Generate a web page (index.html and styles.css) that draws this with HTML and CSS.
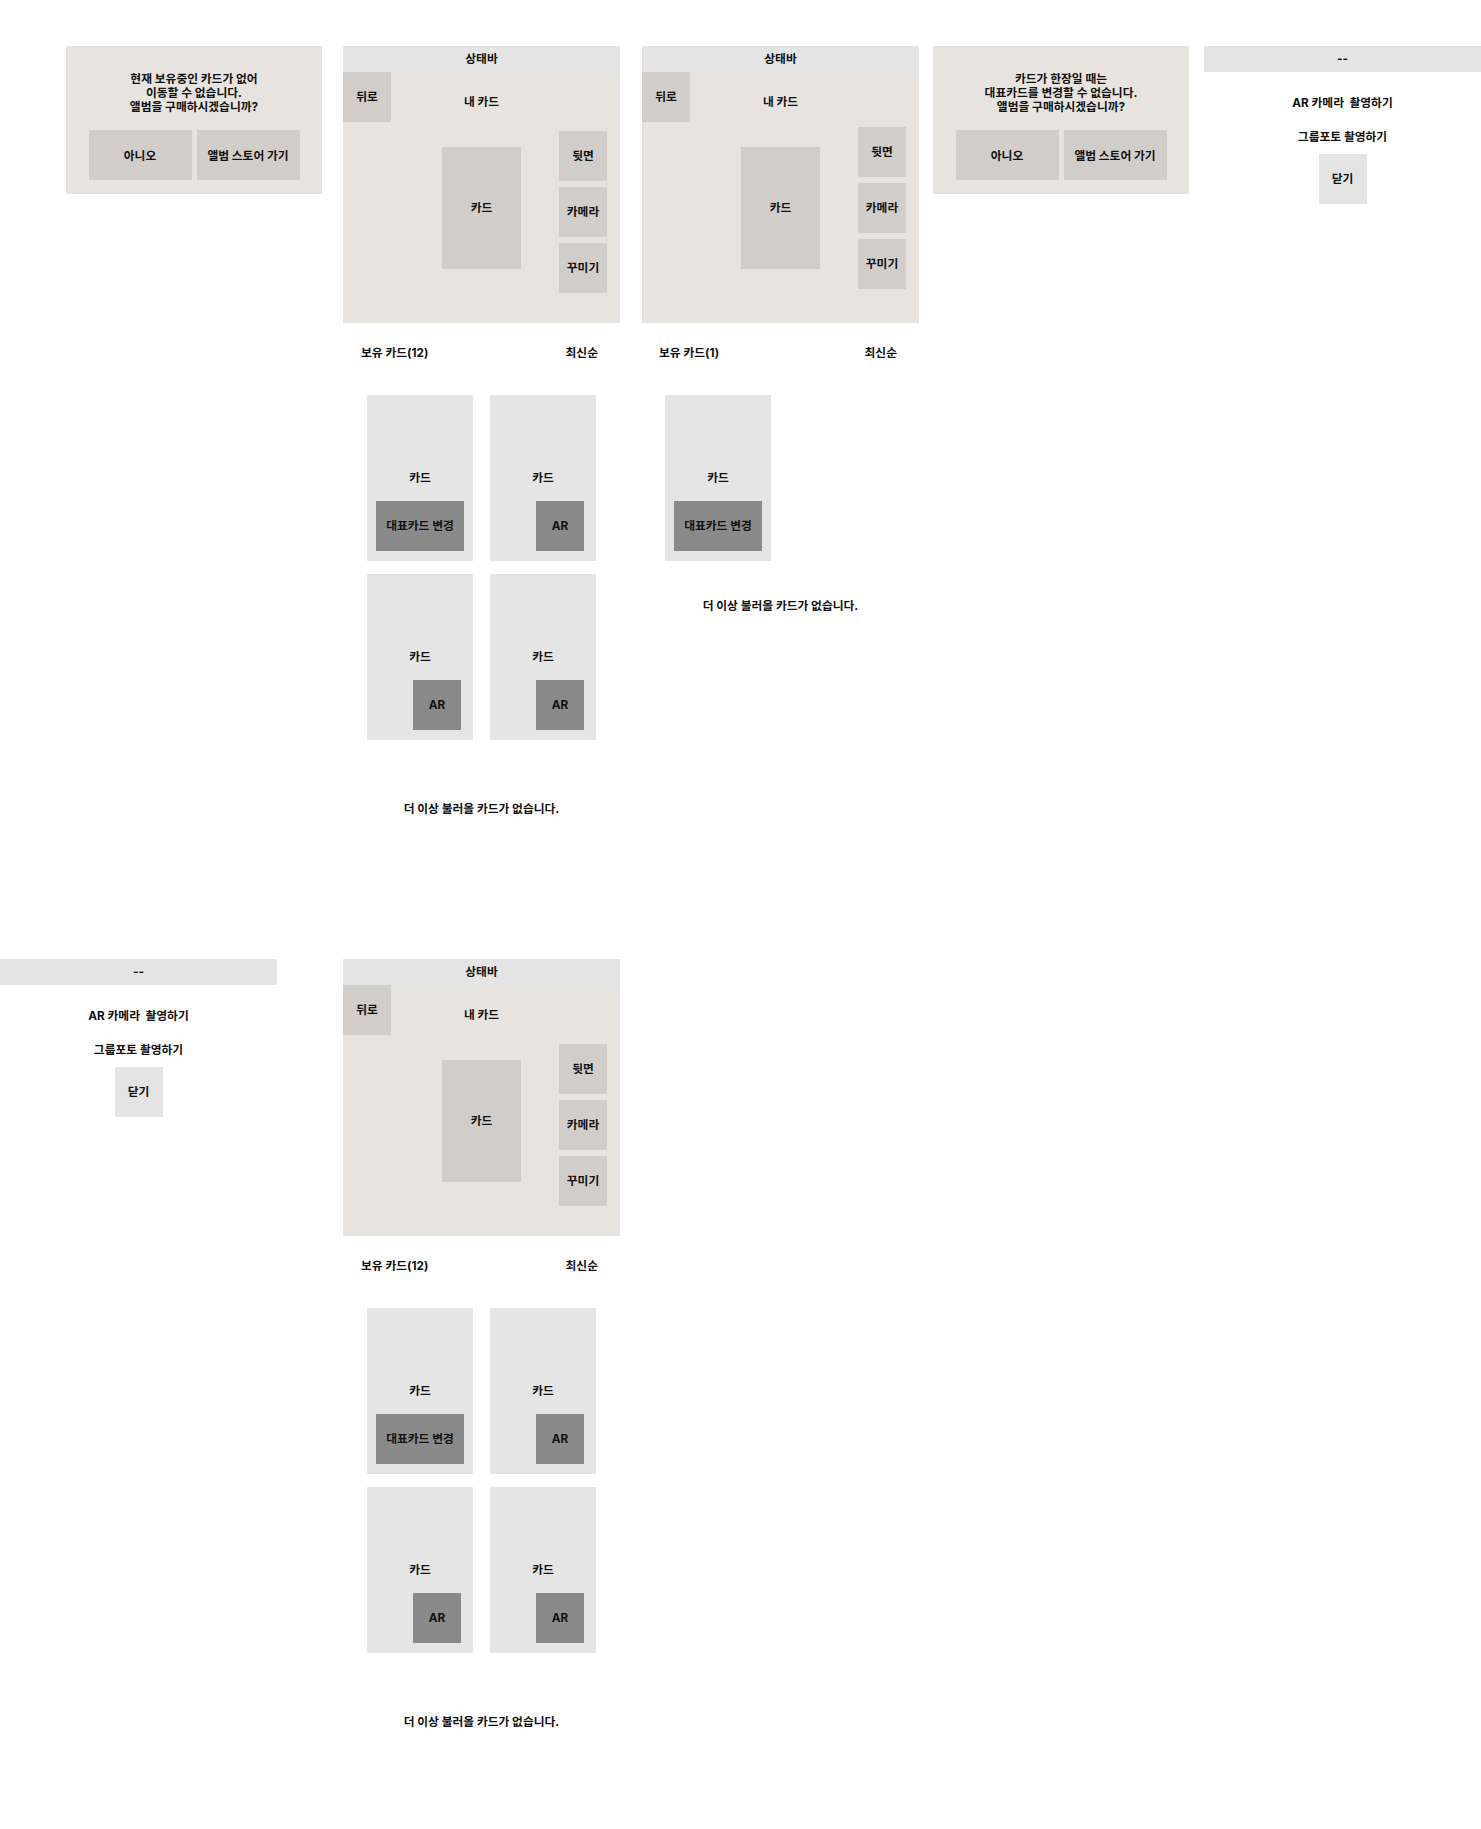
FILE: index.html
```html
<!DOCTYPE html>
<html lang="ko">
<head>
<meta charset="utf-8">
<title>내 카드 와이어프레임</title>
<link rel="stylesheet" href="styles.css">
</head>
<body>
<div class="board">
  <div class="row row-top">
    <!-- Dialog: no cards -->
    <div class="dialog dialog-a">
      <p class="dialog-msg">현재 보유중인 카드가 없어<br>이동할 수 없습니다.<br>앨범을 구매하시겠습니까?</p>
      <div class="dialog-actions">
        <div class="btn-beige dialog-btn">아니오</div>
        <div class="btn-beige dialog-btn">앨범 스토어 가기</div>
      </div>
    </div>

    <!-- My cards (12) -->
    <div class="phone phone-b">
      <div class="screen">
        <div class="status">상태바</div>
        <div class="topbar">
          <div class="btn-beige back">뒤로</div>
          <div class="title">내 카드</div>
        </div>
        <div class="main">
          <div class="big-card">카드</div>
          <div class="tools">
            <div class="btn-beige tool">뒷면</div>
            <div class="btn-beige tool">카메라</div>
            <div class="btn-beige tool">꾸미기</div>
          </div>
        </div>
      </div>
      <div class="list-head"><span>보유 카드(12)</span><span>최신순</span></div>
      <div class="grid">
        <div class="card"><span class="card-label">카드</span><div class="card-btn wide">대표카드 변경</div></div>
        <div class="card"><span class="card-label">카드</span><div class="card-btn ar">AR</div></div>
        <div class="card"><span class="card-label">카드</span><div class="card-btn ar">AR</div></div>
        <div class="card"><span class="card-label">카드</span><div class="card-btn ar">AR</div></div>
      </div>
      <p class="no-more">더 이상 불러올 카드가 없습니다.</p>
    </div>

    <!-- My cards (1) -->
    <div class="phone phone-c">
      <div class="screen">
        <div class="status">상태바</div>
        <div class="topbar">
          <div class="btn-beige back">뒤로</div>
          <div class="title">내 카드</div>
        </div>
        <div class="main">
          <div class="big-card">카드</div>
          <div class="tools tools-high">
            <div class="btn-beige tool">뒷면</div>
            <div class="btn-beige tool">카메라</div>
            <div class="btn-beige tool">꾸미기</div>
          </div>
        </div>
      </div>
      <div class="list-head list-head-c"><span>보유 카드(1)</span><span>최신순</span></div>
      <div class="grid grid-c">
        <div class="card"><span class="card-label">카드</span><div class="card-btn wide">대표카드 변경</div></div>
      </div>
      <p class="no-more no-more-c">더 이상 불러올 카드가 없습니다.</p>
    </div>

    <!-- Dialog: single card -->
    <div class="dialog dialog-d">
      <p class="dialog-msg">카드가 한장일 때는<br>대표카드를 변경할 수 없습니다.<br>앨범을 구매하시겠습니까?</p>
      <div class="dialog-actions">
        <div class="btn-beige dialog-btn">아니오</div>
        <div class="btn-beige dialog-btn">앨범 스토어 가기</div>
      </div>
    </div>

    <!-- AR sheet -->
    <div class="sheet sheet-e">
      <div class="sheet-bar">--</div>
      <p class="sheet-item first">AR 카메라&nbsp; 촬영하기</p>
      <p class="sheet-item">그룹포토 촬영하기</p>
      <div class="close">닫기</div>
    </div>
  </div>

  <div class="row row-bottom">
    <div class="sheet sheet-f">
      <div class="sheet-bar">--</div>
      <p class="sheet-item first">AR 카메라&nbsp; 촬영하기</p>
      <p class="sheet-item">그룹포토 촬영하기</p>
      <div class="close">닫기</div>
    </div>

    <div class="phone phone-g">
      <div class="screen">
        <div class="status">상태바</div>
        <div class="topbar">
          <div class="btn-beige back">뒤로</div>
          <div class="title">내 카드</div>
        </div>
        <div class="main">
          <div class="big-card">카드</div>
          <div class="tools">
            <div class="btn-beige tool">뒷면</div>
            <div class="btn-beige tool">카메라</div>
            <div class="btn-beige tool">꾸미기</div>
          </div>
        </div>
      </div>
      <div class="list-head"><span>보유 카드(12)</span><span>최신순</span></div>
      <div class="grid">
        <div class="card"><span class="card-label">카드</span><div class="card-btn wide">대표카드 변경</div></div>
        <div class="card"><span class="card-label">카드</span><div class="card-btn ar">AR</div></div>
        <div class="card"><span class="card-label">카드</span><div class="card-btn ar">AR</div></div>
        <div class="card"><span class="card-label">카드</span><div class="card-btn ar">AR</div></div>
      </div>
      <p class="no-more">더 이상 불러올 카드가 없습니다.</p>
    </div>
  </div>
</div>
</body>
</html>
```

FILE: styles.css
```css
* {
  box-sizing: border-box;
}

html, body {
  margin: 0;
  padding: 0;
  background: #ffffff;
}

body {
  font-family: "Inter", "Noto Sans CJK KR", "Noto Sans", sans-serif;
  font-size: 11.75px;
  font-weight: 700;
  line-height: 16px;
  color: #111111;
}

p {
  margin: 0;
}

.board {
  width: 1481px;
}

.row {
  display: flex;
  align-items: flex-start;
}

.row-top {
  padding-top: 46px;
  height: 959px;
}

/* ---------- shared buttons ---------- */
.btn-beige {
  background: #d1cec9;
  display: flex;
  align-items: center;
  justify-content: center;
  text-align: center;
}

/* ---------- dialogs ---------- */
.dialog {
  width: 256px;
  height: 148px;
  background: #e7e4df;
  padding-top: 25px;
}

.dialog-a {
  margin-left: 66px;
}

.dialog-d {
  margin-left: 14px;
}

.dialog-msg {
  text-align: center;
  line-height: 14px;
  padding-top: 1px;
}

.dialog-actions {
  display: flex;
  justify-content: center;
  gap: 5px;
  margin-top: 16px;
}

.dialog-btn {
  width: 103px;
  height: 50px;
  padding-top: 1px;
}

/* ---------- phone screens ---------- */
.phone {
  width: 277px;
}

.phone-b {
  margin-left: 21px;
}

.phone-c {
  margin-left: 22px;
}

.phone-g {
  margin-left: 66px;
}

.screen {
  width: 277px;
  height: 277px;
  background: #e7e4df;
}

.status {
  height: 26px;
  background: #e4e4e4;
  display: flex;
  align-items: center;
  justify-content: center;
}

.topbar {
  display: grid;
  grid-template-columns: 48px 1fr 48px;
  height: 50px;
}

.back {
  height: 50px;
}

.title {
  text-align: center;
  padding-top: 22px;
}

.main {
  display: grid;
  grid-template-columns: 1fr 79px 1fr;
  align-items: start;
}

.big-card {
  grid-column: 2;
  margin-top: 25px;
  height: 122px;
  background: #d1cec9;
  display: flex;
  align-items: center;
  justify-content: center;
}

.tools {
  grid-column: 3;
  justify-self: end;
  margin-right: 13px;
  margin-top: 9px;
  display: flex;
  flex-direction: column;
  gap: 6px;
}

.tools-high {
  margin-top: 5px;
}

.tool {
  width: 48px;
  height: 50px;
}

/* ---------- card list ---------- */
.list-head {
  display: flex;
  justify-content: space-between;
  padding: 22px 22px 0 18px;
}

.list-head-c {
  padding-left: 17px;
}

.grid {
  display: grid;
  grid-template-columns: 106px 106px;
  grid-auto-rows: 166px;
  column-gap: 17px;
  row-gap: 13px;
  padding-left: 24px;
  margin-top: 34px;
}

.grid-c {
  padding-left: 23px;
}

.card {
  background: #e5e5e5;
  display: flex;
  flex-direction: column;
  padding-top: 75px;
  padding-bottom: 10px;
}

.card-label {
  text-align: center;
}

.card-btn {
  margin-top: auto;
  height: 50px;
  background: #8a8a8a;
  display: flex;
  align-items: center;
  justify-content: center;
}

.card-btn.wide {
  margin-left: 9px;
  margin-right: 9px;
}

.card-btn.ar {
  width: 48px;
  align-self: flex-end;
  margin-right: 12px;
}

.no-more {
  text-align: center;
  margin-top: 61px;
}

.no-more-c {
  margin-top: 37px;
}

/* ---------- AR sheet ---------- */
.sheet {
  width: 277px;
  background: #ffffff;
  display: flex;
  flex-direction: column;
  align-items: center;
}

.sheet-e {
  margin-left: 15px;
}

.sheet-bar {
  width: 100%;
  height: 26px;
  background: #e4e4e4;
  display: flex;
  align-items: center;
  justify-content: center;
}

.sheet-item {
  margin-top: 18px;
}

.sheet-item.first {
  margin-top: 23px;
}

.close {
  margin-top: 9px;
  width: 48px;
  height: 50px;
  background: #e4e4e4;
  display: flex;
  align-items: center;
  justify-content: center;
}
```
